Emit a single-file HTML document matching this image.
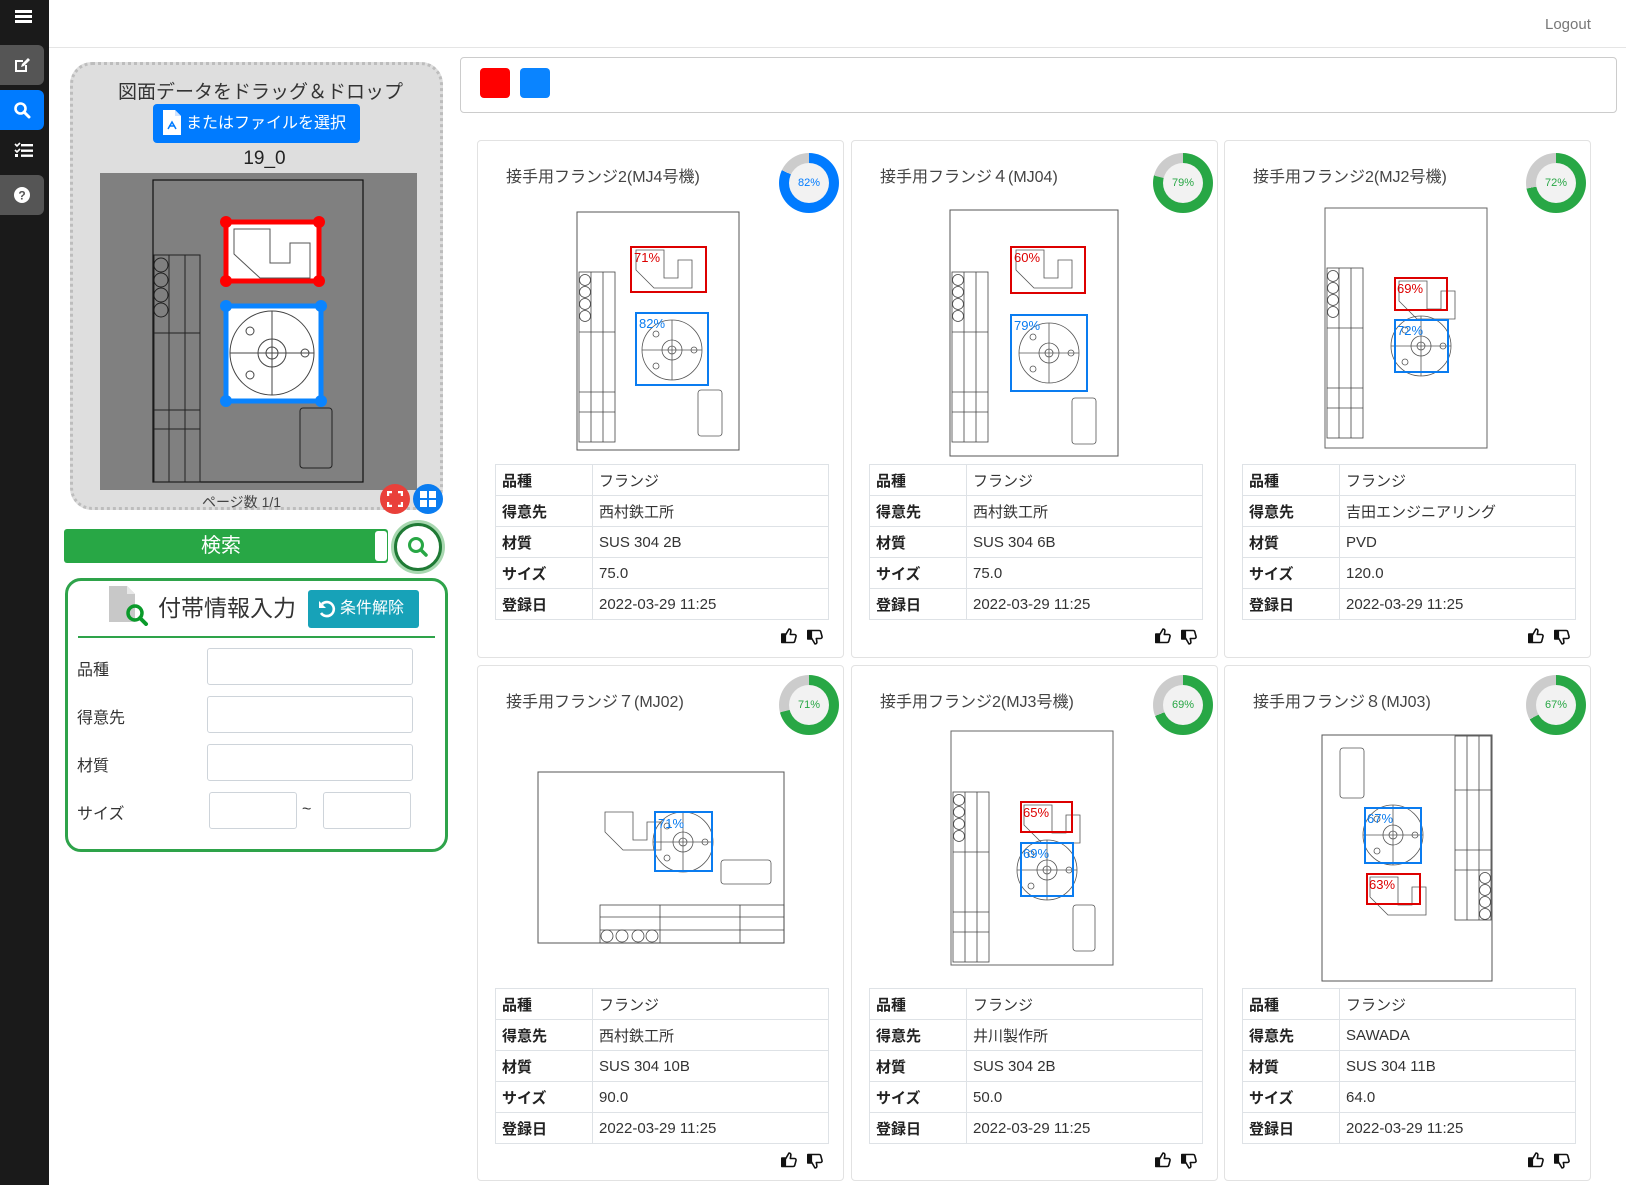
<!DOCTYPE html>
<html><head><meta charset="utf-8">
<style>
*{box-sizing:border-box;margin:0;padding:0}
body{width:1626px;height:1185px;background:#fff;font-family:"Liberation Sans","Noto Sans CJK JP",sans-serif;color:#333;position:relative;overflow:hidden}
.a{position:absolute}
.sb{left:0;top:0;width:49px;height:1185px;background:#1a1a1a}
.sbb{position:absolute;left:0;width:44px;height:40px;border-radius:0 6px 6px 0;display:flex;align-items:center;justify-content:center}
.card{position:absolute;width:367px;border:1px solid #e2e2e2;border-radius:4px;background:#fff}
.ttl{position:absolute;left:28px;top:22px;font-size:16px;color:#444;white-space:nowrap}
.dn{position:absolute;width:60px;height:60px;border-radius:50%}
.dn i{position:absolute;left:10px;top:10px;width:40px;height:40px;border-radius:50%;background:#f2f2f2;font-style:normal;font-size:11px;text-align:center;line-height:40px}
table{position:absolute;left:17px;width:334px;border-collapse:collapse;font-size:15px}
td{border:1px solid #dee2e6;height:31px;padding:0 6px;color:#333}
td:first-child{width:97px;font-weight:bold;color:#222}
</style></head><body>
<div class="a sb">
<div class="a" style="left:15px;top:10px;width:17px;height:3px;background:#fff;box-shadow:0 5px 0 #fff,0 10px 0 #fff"></div>
<div class="sbb" style="top:45px;background:#555"><svg width="18" height="18" viewBox="0 0 18 18"><path d="M2 4h8v2H4v8h8V9h2v7H2z" fill="#fff"/><path d="M8 11l1-3 6-6 2 2-6 6z" fill="#fff"/></svg></div>
<div class="sbb" style="top:90px;background:#007bff"><svg width="18" height="18" viewBox="0 0 18 18"><circle cx="7.5" cy="7.5" r="5" fill="none" stroke="#fff" stroke-width="2.6"/><path d="M11 11l5 5" stroke="#fff" stroke-width="3" stroke-linecap="round"/></svg></div>
<div class="a" style="left:14px;top:142px"><svg width="20" height="16" viewBox="0 0 20 16"><path d="M1 2l2 2 3-3M1 8l2 2 3-3" stroke="#fff" stroke-width="1.6" fill="none"/><rect x="1" y="12" width="3" height="3" fill="#fff"/><rect x="7" y="2" width="12" height="2.4" fill="#fff"/><rect x="7" y="7.5" width="12" height="2.4" fill="#fff"/><rect x="7" y="12.5" width="12" height="2.4" fill="#fff"/></svg></div>
<div class="sbb" style="top:175px;background:#555"><svg width="18" height="18" viewBox="0 0 18 18"><circle cx="9" cy="9" r="8" fill="#fff"/><text x="9" y="13.5" font-size="12" font-weight="bold" text-anchor="middle" fill="#555" font-family="Liberation Sans">?</text></svg></div>
</div>
<div class="a" style="left:49px;top:47px;width:1577px;height:1px;background:#e5e5e5"></div>
<div class="a" style="left:1545px;top:16px;font-size:15px;color:#777">Logout</div>

<!-- left panel -->
<div class="a" style="left:70px;top:62px;width:373px;height:448px;background:#dedede;border:3px dotted #bdbdbd;border-radius:22px"></div>
<div class="a" style="left:70px;top:77px;width:373px;text-align:center;font-size:19px;color:#333;padding-left:8px">図面データをドラッグ＆ドロップ</div>
<div class="a" style="left:153px;top:104px;width:207px;height:39px;background:#007bff;border-radius:4px;color:#fff;font-size:16px;line-height:39px;padding-left:33px;white-space:nowrap">またはファイルを選択</div>
<svg class="a" style="left:163px;top:110px" width="18" height="25" viewBox="0 0 18 25"><path d="M0 0h12l6 6v19H0z" fill="#fff"/><path d="M12 0v6h6" fill="#cfe3ff"/><path d="M5 19l4-7 4 7M6 16h6" stroke="#007bff" stroke-width="1.5" fill="none"/></svg>
<div class="a" style="left:70px;top:148px;width:373px;text-align:center;font-size:19px;color:#222;padding-left:16px">19_0</div>
<div class="a" style="left:100px;top:173px;width:317px;height:317px;background:#808080"></div>
<svg class="a" style="left:100px;top:173px" width="317" height="317">
<rect x="53" y="7" width="210" height="302" fill="none" stroke="#111" stroke-width="1.2"/>
<g stroke="#222" fill="none" stroke-width="1"><rect x="54" y="82" width="46" height="227"/><line x1="69" y1="82" x2="69" y2="309"/><line x1="85" y1="82" x2="85" y2="309"/><line x1="54" y1="160" x2="100" y2="160"/><line x1="54" y1="237" x2="100" y2="237"/><line x1="54" y1="256" x2="100" y2="256"/><circle cx="61" cy="92" r="7"/><circle cx="61" cy="107" r="7"/><circle cx="61" cy="122" r="7"/><circle cx="61" cy="137" r="7"/><rect x="200" y="235" width="32" height="60" rx="3"/></g>
<rect x="126" y="49" width="93" height="59" fill="#fff" stroke="#f00" stroke-width="5"/>
<g stroke="#555" fill="none" stroke-width="1"><path d="M134 56v25l26 24h50V70h-20v20h-20V56z"/></g>
<g fill="#f00"><circle cx="126" cy="49" r="6"/><circle cx="219" cy="49" r="6"/><circle cx="126" cy="108" r="6"/><circle cx="219" cy="108" r="6"/></g>
<rect x="126" y="133" width="95" height="95" fill="#fff" stroke="#0a84ff" stroke-width="5"/>
<g stroke="#444" fill="none" stroke-width="1"><circle cx="172" cy="180" r="42"/><circle cx="172" cy="180" r="14"/><circle cx="172" cy="180" r="6"/><line x1="130" y1="180" x2="214" y2="180"/><line x1="172" y1="138" x2="172" y2="222"/><circle cx="150" cy="158" r="4"/><circle cx="150" cy="202" r="4"/><circle cx="205" cy="180" r="4"/></g>
<g fill="#0a84ff"><circle cx="126" cy="133" r="6"/><circle cx="221" cy="133" r="6"/><circle cx="126" cy="228" r="6"/><circle cx="221" cy="228" r="6"/></g>
</svg>
<div class="a" style="left:70px;top:492px;width:373px;text-align:center;font-size:14px;color:#444;padding-right:30px">ページ数 1/1</div>
<div class="a" style="left:380px;top:484px;width:30px;height:30px;border-radius:50%;background:#e9403a"></div>
<svg class="a" style="left:387px;top:491px" width="16" height="16"><path d="M1 5V1h4M11 1h4v4M15 11v4h-4M5 15H1v-4" stroke="#fff" stroke-width="2.4" fill="none"/></svg>
<div class="a" style="left:413px;top:484px;width:30px;height:30px;border-radius:50%;background:#0a7cf0"></div>
<svg class="a" style="left:420px;top:491px" width="16" height="16"><rect x="0" y="0" width="7" height="7" fill="#fff"/><rect x="9" y="0" width="7" height="7" fill="#fff"/><rect x="0" y="9" width="7" height="7" fill="#fff"/><rect x="9" y="9" width="7" height="7" fill="#fff"/></svg>

<div class="a" style="left:64px;top:529px;width:324px;height:34px;background:#28a745;border-radius:3px;color:#fff;font-size:20px;line-height:34px;text-align:center;padding-right:10px">検索</div>
<div class="a" style="left:375px;top:531px;width:12px;height:30px;background:#fff;border-radius:3px"></div>
<div class="a" style="left:394px;top:523px;width:48px;height:48px;border-radius:50%;background:#fff;border:3px solid #1f7a35;box-shadow:0 0 0 3px #a8d8b0"></div>
<svg class="a" style="left:406px;top:535px" width="24" height="24"><circle cx="10" cy="10" r="6.5" fill="none" stroke="#28a745" stroke-width="3"/><path d="M15 15l5 5" stroke="#28a745" stroke-width="3.5" stroke-linecap="round"/></svg>

<div class="a" style="left:65px;top:578px;width:383px;height:274px;border:3px solid #2ea34a;border-radius:16px"></div>
<svg class="a" style="left:109px;top:586px" width="40" height="40"><path d="M0 0h18l8 8v28H0z" fill="#c8c8c8"/><path d="M18 0v8h8" fill="#e8e8e8"/><circle cx="26" cy="27" r="7" fill="none" stroke="#0a9a2a" stroke-width="3.5"/><path d="M31 32l6 6" stroke="#0a9a2a" stroke-width="4" stroke-linecap="round"/></svg>
<div class="a" style="left:158px;top:589px;font-size:23px;color:#333">付帯情報入力</div>
<div class="a" style="left:308px;top:590px;width:111px;height:38px;background:#17a2b8;border-radius:3px;color:#fff;font-size:16px;line-height:38px;padding-left:32px">条件解除</div>
<svg class="a" style="left:318px;top:600px" width="18" height="18"><path d="M4 4a7 7 0 1 1-1 9" fill="none" stroke="#fff" stroke-width="2.6"/><path d="M1 1v7h7z" fill="#fff"/></svg>
<div class="a" style="left:78px;top:636px;width:357px;height:2px;background:#2ea34a"></div>
<div class="a" style="left:77px;top:656px;font-size:16px">品種</div>
<div class="a" style="left:77px;top:704px;font-size:16px">得意先</div>
<div class="a" style="left:77px;top:752px;font-size:16px">材質</div>
<div class="a" style="left:77px;top:800px;font-size:16px">サイズ</div>
<div class="a" style="left:207px;top:648px;width:206px;height:37px;border:1px solid #ced4da;border-radius:3px"></div>
<div class="a" style="left:207px;top:696px;width:206px;height:37px;border:1px solid #ced4da;border-radius:3px"></div>
<div class="a" style="left:207px;top:744px;width:206px;height:37px;border:1px solid #ced4da;border-radius:3px"></div>
<div class="a" style="left:209px;top:792px;width:88px;height:37px;border:1px solid #ced4da;border-radius:3px"></div>
<div class="a" style="left:302px;top:801px;font-size:16px">~</div>
<div class="a" style="left:323px;top:792px;width:88px;height:37px;border:1px solid #ced4da;border-radius:3px"></div>

<!-- filter box -->
<div class="a" style="left:460px;top:57px;width:1157px;height:56px;border:1px solid #ccc;border-radius:4px"></div>
<div class="a" style="left:480px;top:68px;width:30px;height:30px;background:#f00;border-radius:4px"></div>
<div class="a" style="left:520px;top:68px;width:30px;height:30px;background:#0a84ff;border-radius:4px"></div>

<!-- cards -->
<div class="card" style="left:477px;top:140px;height:518px"><div class="ttl">接手用フランジ2(MJ4号機)</div>
<div class="dn" style="left:301px;top:12px;background:conic-gradient(#007bff 0 82%,#ccc 0)"><i style="color:#007bff">82%</i></div>
<table style="top:323px"><tr><td>品種</td><td>フランジ</td></tr><tr><td>得意先</td><td>西村鉄工所</td></tr><tr><td>材質</td><td>SUS 304 2B</td></tr><tr><td>サイズ</td><td>75.0</td></tr><tr><td>登録日</td><td>2022-03-29 11:25</td></tr></table></div>
<div class="card" style="left:851px;top:140px;height:518px"><div class="ttl">接手用フランジ４(MJ04)</div>
<div class="dn" style="left:301px;top:12px;background:conic-gradient(#28a745 0 79%,#ccc 0)"><i style="color:#28a745">79%</i></div>
<table style="top:323px"><tr><td>品種</td><td>フランジ</td></tr><tr><td>得意先</td><td>西村鉄工所</td></tr><tr><td>材質</td><td>SUS 304 6B</td></tr><tr><td>サイズ</td><td>75.0</td></tr><tr><td>登録日</td><td>2022-03-29 11:25</td></tr></table></div>
<div class="card" style="left:1224px;top:140px;height:518px"><div class="ttl">接手用フランジ2(MJ2号機)</div>
<div class="dn" style="left:301px;top:12px;background:conic-gradient(#28a745 0 72%,#ccc 0)"><i style="color:#28a745">72%</i></div>
<table style="top:323px"><tr><td>品種</td><td>フランジ</td></tr><tr><td>得意先</td><td>吉田エンジニアリング</td></tr><tr><td>材質</td><td>PVD</td></tr><tr><td>サイズ</td><td>120.0</td></tr><tr><td>登録日</td><td>2022-03-29 11:25</td></tr></table></div>
<div class="card" style="left:477px;top:665px;height:516px"><div class="ttl">接手用フランジ７(MJ02)</div>
<div class="dn" style="left:301px;top:9px;background:conic-gradient(#28a745 0 71%,#ccc 0)"><i style="color:#28a745">71%</i></div>
<table style="top:322px"><tr><td>品種</td><td>フランジ</td></tr><tr><td>得意先</td><td>西村鉄工所</td></tr><tr><td>材質</td><td>SUS 304 10B</td></tr><tr><td>サイズ</td><td>90.0</td></tr><tr><td>登録日</td><td>2022-03-29 11:25</td></tr></table></div>
<div class="card" style="left:851px;top:665px;height:516px"><div class="ttl">接手用フランジ2(MJ3号機)</div>
<div class="dn" style="left:301px;top:9px;background:conic-gradient(#28a745 0 69%,#ccc 0)"><i style="color:#28a745">69%</i></div>
<table style="top:322px"><tr><td>品種</td><td>フランジ</td></tr><tr><td>得意先</td><td>井川製作所</td></tr><tr><td>材質</td><td>SUS 304 2B</td></tr><tr><td>サイズ</td><td>50.0</td></tr><tr><td>登録日</td><td>2022-03-29 11:25</td></tr></table></div>
<div class="card" style="left:1224px;top:665px;height:516px"><div class="ttl">接手用フランジ８(MJ03)</div>
<div class="dn" style="left:301px;top:9px;background:conic-gradient(#28a745 0 67%,#ccc 0)"><i style="color:#28a745">67%</i></div>
<table style="top:322px"><tr><td>品種</td><td>フランジ</td></tr><tr><td>得意先</td><td>SAWADA</td></tr><tr><td>材質</td><td>SUS 304 11B</td></tr><tr><td>サイズ</td><td>64.0</td></tr><tr><td>登録日</td><td>2022-03-29 11:25</td></tr></table></div>

<!-- drawings -->
<svg class="a" style="left:0;top:0" width="1626" height="1185" font-family="Liberation Sans">
<defs>
<g id="tbv" stroke="#444" fill="none" stroke-width="0.8"><rect x="0" y="0" width="36" height="170"/><line x1="12" y1="0" x2="12" y2="170"/><line x1="24" y1="0" x2="24" y2="170"/><line x1="0" y1="60" x2="36" y2="60"/><line x1="0" y1="120" x2="36" y2="120"/><line x1="0" y1="140" x2="36" y2="140"/><circle cx="6" cy="8" r="5.5"/><circle cx="6" cy="20" r="5.5"/><circle cx="6" cy="32" r="5.5"/><circle cx="6" cy="44" r="5.5"/></g>
<g id="fl" stroke="#555" fill="none" stroke-width="0.8"><circle cx="0" cy="0" r="30"/><circle cx="0" cy="0" r="10"/><circle cx="0" cy="0" r="4"/><line x1="-30" y1="0" x2="30" y2="0"/><line x1="0" y1="-30" x2="0" y2="30"/><circle cx="-16" cy="-16" r="3"/><circle cx="-16" cy="16" r="3"/><circle cx="22" cy="0" r="3"/></g>
<g id="sec" stroke="#555" fill="none" stroke-width="0.8"><path d="M0 0v20l18 18h38V10H42v18H28V0z"/></g>
</defs>
<!-- card1 -->
<rect x="577" y="212" width="162" height="238" fill="#fff" stroke="#555"/>
<use href="#tbv" x="579" y="272"/>
<use href="#sec" x="636" y="250"/>
<rect x="631" y="247" width="75" height="45" fill="none" stroke="#d00" stroke-width="2"/><text x="634" y="262" fill="#d00" font-size="13">71%</text>
<use href="#fl" x="672" y="350"/>
<rect x="636" y="313" width="72" height="72" fill="none" stroke="#0a7cf0" stroke-width="2"/><text x="639" y="328" fill="#0a7cf0" font-size="13">82%</text>
<rect x="698" y="390" width="24" height="46" rx="3" fill="none" stroke="#555" stroke-width="0.8"/>
<!-- card2 -->
<rect x="950" y="210" width="168" height="246" fill="#fff" stroke="#555"/>
<use href="#tbv" x="952" y="272"/>
<use href="#sec" x="1016" y="250"/>
<rect x="1011" y="247" width="74" height="46" fill="none" stroke="#d00" stroke-width="2"/><text x="1014" y="262" fill="#d00" font-size="13">60%</text>
<use href="#fl" x="1049" y="353"/>
<rect x="1011" y="315" width="76" height="76" fill="none" stroke="#0a7cf0" stroke-width="2"/><text x="1014" y="330" fill="#0a7cf0" font-size="13">79%</text>
<rect x="1072" y="398" width="24" height="46" rx="3" fill="none" stroke="#555" stroke-width="0.8"/>
<!-- card3 -->
<rect x="1325" y="208" width="162" height="240" fill="#fff" stroke="#666"/>
<use href="#tbv" x="1327" y="268"/>
<use href="#sec" x="1399" y="281"/>
<rect x="1395" y="278" width="52" height="32" fill="none" stroke="#d00" stroke-width="2"/><text x="1397" y="293" fill="#d00" font-size="13">69%</text>
<use href="#fl" x="1421" y="346"/>
<rect x="1395" y="320" width="53" height="52" fill="none" stroke="#0a7cf0" stroke-width="2"/><text x="1397" y="335" fill="#0a7cf0" font-size="13">72%</text>
<!-- card4 -->
<rect x="538" y="772" width="246" height="171" fill="#fff" stroke="#555"/>
<use href="#sec" x="605" y="812"/>
<use href="#fl" x="683" y="842"/>
<rect x="655" y="812" width="57" height="59" fill="none" stroke="#0a7cf0" stroke-width="2"/><text x="658" y="828" fill="#0a7cf0" font-size="13">71%</text>
<rect x="721" y="860" width="50" height="24" rx="3" fill="none" stroke="#555" stroke-width="0.8"/>
<g stroke="#444" fill="none" stroke-width="0.8"><rect x="600" y="905" width="184" height="38"/><line x1="600" y1="917" x2="784" y2="917"/><line x1="600" y1="930" x2="784" y2="930"/><line x1="660" y1="905" x2="660" y2="943"/><line x1="740" y1="905" x2="740" y2="943"/><circle cx="607" cy="936" r="6"/><circle cx="622" cy="936" r="6"/><circle cx="638" cy="936" r="6"/><circle cx="652" cy="936" r="6"/></g>
<!-- card5 -->
<rect x="951" y="731" width="162" height="234" fill="#fff" stroke="#666"/>
<use href="#tbv" x="953" y="792"/>
<use href="#sec" x="1024" y="805"/>
<rect x="1021" y="802" width="51" height="30" fill="none" stroke="#d00" stroke-width="2"/><text x="1023" y="817" fill="#d00" font-size="13">65%</text>
<use href="#fl" x="1047" y="870"/>
<rect x="1021" y="843" width="52" height="53" fill="none" stroke="#0a7cf0" stroke-width="2"/><text x="1023" y="858" fill="#0a7cf0" font-size="13">69%</text>
<rect x="1073" y="905" width="22" height="46" rx="3" fill="none" stroke="#555" stroke-width="0.8"/>
<!-- card6 -->
<rect x="1322" y="735" width="170" height="246" fill="#fff" stroke="#555"/>
<g stroke="#444" fill="none" stroke-width="0.8"><rect x="1455" y="736" width="36" height="184"/><line x1="1467" y1="736" x2="1467" y2="920"/><line x1="1479" y1="736" x2="1479" y2="920"/><line x1="1455" y1="790" x2="1491" y2="790"/><line x1="1455" y1="850" x2="1491" y2="850"/><line x1="1455" y1="870" x2="1491" y2="870"/><circle cx="1485" cy="878" r="5.5"/><circle cx="1485" cy="890" r="5.5"/><circle cx="1485" cy="902" r="5.5"/><circle cx="1485" cy="914" r="5.5"/></g>
<rect x="1340" y="748" width="24" height="50" rx="3" fill="none" stroke="#555" stroke-width="0.8"/>
<use href="#fl" x="1393" y="835"/>
<rect x="1365" y="808" width="56" height="55" fill="none" stroke="#0a7cf0" stroke-width="2"/><text x="1367" y="823" fill="#0a7cf0" font-size="13">67%</text>
<use href="#sec" x="1370" y="877"/>
<rect x="1367" y="874" width="53" height="30" fill="none" stroke="#d00" stroke-width="2"/><text x="1369" y="889" fill="#d00" font-size="13">63%</text>
</svg>

<!-- thumbs -->
<svg class="a" style="left:0;top:0" width="1626" height="1185">
<defs>
<g id="tu" fill="none" stroke="#111" stroke-width="1.6" stroke-linejoin="round"><rect x="0.8" y="7" width="3.5" height="8.5" fill="#111"/><path d="M4.5 8l3.5-6c1.3 0 2.2 1 1.8 2.6L9.3 7.5h4.2c1.2 0 1.8 1 1.5 2.1l-1.3 4.8c-.3.8-.9 1.1-1.6 1.1H4.5"/></g>
<g id="td"><use href="#tu" transform="matrix(1 0 0 -1 0 17)"/></g>
</defs>
<use href="#tu" x="781" y="627"/><use href="#td" x="807" y="629"/>
<use href="#tu" x="1155" y="627"/><use href="#td" x="1181" y="629"/>
<use href="#tu" x="1528" y="627"/><use href="#td" x="1554" y="629"/>
<use href="#tu" x="781" y="1151"/><use href="#td" x="807" y="1153"/>
<use href="#tu" x="1155" y="1151"/><use href="#td" x="1181" y="1153"/>
<use href="#tu" x="1528" y="1151"/><use href="#td" x="1554" y="1153"/>
</svg>
</body></html>
